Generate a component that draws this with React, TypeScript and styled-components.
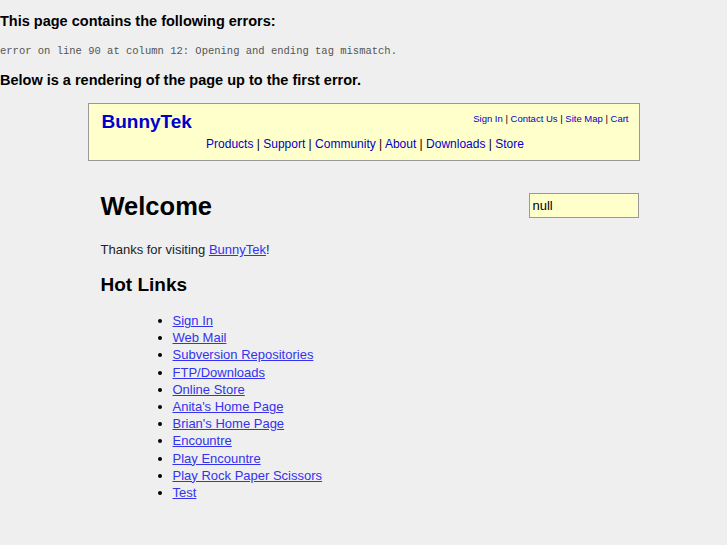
import React from 'react';
import styled, { createGlobalStyle } from 'styled-components';

const GlobalStyle = createGlobalStyle`
  html, body {
    margin: 0;
    padding: 0;
    background: #efefef;
    font-family: "Liberation Sans", Arial, sans-serif;
  }
`;

const ErrorBanner = styled.div`
  padding: 12px 0 0;
`;

const ErrorTitle = styled.h3`
  margin: 0;
  font-size: 14.5px;
  font-weight: bold;
  color: #000;
  line-height: 19px;
`;

const ErrorText = styled.div`
  margin: 13px 0 13px;
  font-family: "Liberation Mono", "Courier New", monospace;
  font-size: 10.5px;
  color: #555;
  line-height: 14px;
`;

const Page = styled.div`
  width: 552px;
  margin: 13px auto 0;
`;

const Header = styled.div`
  background: #ffffcc;
  border: 1px solid #999;
  padding: 6px 10px 8px 13px;
  display: flex;
  flex-direction: column;
`;

const TopRow = styled.div`
  display: flex;
  justify-content: space-between;
  align-items: flex-start;
`;

const Brand = styled.a`
  font-size: 19px;
  font-weight: bold;
  color: #0000cc;
  text-decoration: none;
  line-height: 23px;
`;

const Utility = styled.div`
  font-size: 9.5px;
  color: #000;
  padding-top: 3px;
`;

const NavLink = styled.a`
  color: #0000cc;
  text-decoration: none;
`;

const MainNav = styled.div`
  text-align: center;
  font-size: 12px;
  margin-top: 3px;
  line-height: 16px;
`;

const Content = styled.div`
  padding: 0 0 0 13px;
`;

const TitleRow = styled.div`
  display: flex;
  justify-content: space-between;
  align-items: flex-start;
  margin-top: 30px;
`;

const Heading = styled.h1`
  margin: 0;
  font-size: 25.5px;
  font-weight: bold;
  line-height: 30px;
`;

const SearchBox = styled.input`
  width: 102px;
  height: 21px;
  margin-top: 2px;
  margin-right: 1px;
  padding: 1px 3px;
  background: #ffffcc;
  border: 1px solid #999;
  font-family: "Liberation Sans", Arial, sans-serif;
  font-size: 13px;
  color: #000;
  outline: none;
`;

const Paragraph = styled.p`
  margin: 21px 0 0;
  font-size: 13px;
  color: #222;
  line-height: 16px;
`;

const TextLink = styled.a`
  color: #3333ee;
  text-decoration: underline;
`;

const SubHeading = styled.h2`
  margin: 15px 0 0;
  font-size: 19px;
  font-weight: bold;
  line-height: 24px;
`;

const LinkList = styled.ul`
  margin: 15px 0 0;
  padding-left: 72px;
  font-size: 13px;
  line-height: 17.2px;
`;

const hotLinks = [
  'Sign In',
  'Web Mail',
  'Subversion Repositories',
  'FTP/Downloads',
  'Online Store',
  "Anita's Home Page",
  "Brian's Home Page",
  'Encountre',
  'Play Encountre',
  'Play Rock Paper Scissors',
  'Test',
];

const utilLinks = ['Sign In', 'Contact Us', 'Site Map', 'Cart'];
const navLinks = ['Products', 'Support', 'Community', 'About', 'Downloads', 'Store'];

const joinLinks = (items: string[]) =>
  items.map((item, i) => (
    <React.Fragment key={item}>
      {i > 0 && ' | '}
      <NavLink href="#">{item}</NavLink>
    </React.Fragment>
  ));

const App = () => {
  return (
    <>
      <GlobalStyle/>
      <ErrorBanner>
        <ErrorTitle>This page contains the following errors:</ErrorTitle>
        <ErrorText>error on line 90 at column 12: Opening and ending tag mismatch.</ErrorText>
        <ErrorTitle>Below is a rendering of the page up to the first error.</ErrorTitle>
      </ErrorBanner>
      <Page>
        <Header>
          <TopRow>
            <Brand href="#">BunnyTek</Brand>
            <Utility>{joinLinks(utilLinks)}</Utility>
          </TopRow>
          <MainNav>{joinLinks(navLinks)}</MainNav>
        </Header>
        <Content>
          <TitleRow>
            <Heading>Welcome</Heading>
            <SearchBox defaultValue="null"/>
          </TitleRow>
          <Paragraph>
            Thanks for visiting <TextLink href="#">BunnyTek</TextLink>!
          </Paragraph>
          <SubHeading>Hot Links</SubHeading>
          <LinkList>
            {hotLinks.map(link => (
              <li key={link}><TextLink href="#">{link}</TextLink></li>
            ))}
          </LinkList>
        </Content>
      </Page>
    </>
  );
};

export default App;
